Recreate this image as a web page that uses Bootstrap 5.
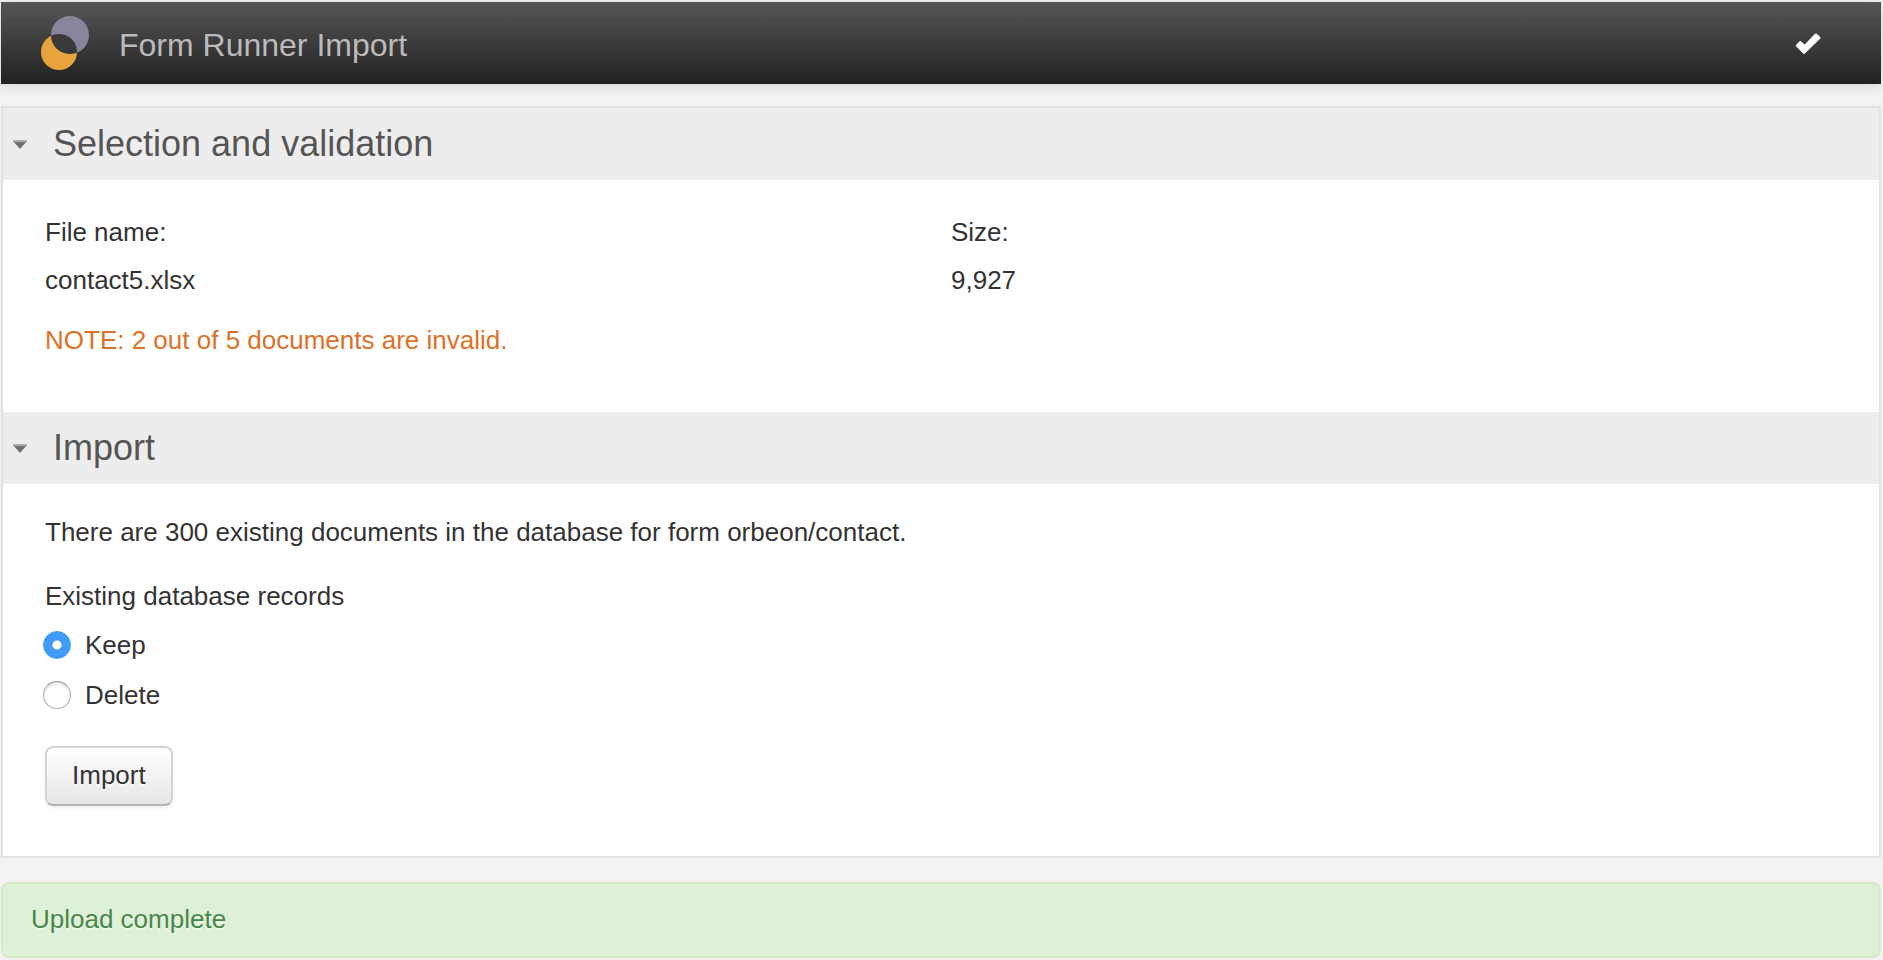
<!DOCTYPE html>
<html lang="en">
<head>
<meta charset="utf-8">
<meta name="viewport" content="width=device-width, initial-scale=1">
<title>Form Runner Import</title>
<link rel="stylesheet" href="https://cdn.jsdelivr.net/npm/bootstrap@5.3.0/dist/css/bootstrap.min.css">
<style>
  body {
    background: #f2f2f2;
    color: #333;
    font-family: "Liberation Sans", Arial, sans-serif;
    font-size: 26px;
    line-height: 48px;
    padding: 2px 2px 2px 1px;
  }
  .fr-navbar {
    background: linear-gradient(#555, #222);
    box-shadow: 0 2px 12px rgba(0, 0, 0, .12);
    min-height: 82px;
    padding: 0 60px 0 40px;
  }
  .fr-brand { gap: 28px; color: #bbb; font-size: 32px; line-height: 40px; }
  .fr-brand:hover { color: #ddd; }
  .fr-brand span { padding-top: 4px; }
  .fr-panel { background: #fff; border: 2px solid #e2e2e2; margin-top: 22px; }
  .fr-toggle {
    background: #ededed;
    color: #555;
    font-size: 36px;
    line-height: 44px;
    gap: 26px;
    padding: 14px 10px;
  }
  .fr-body { padding: 28px 22px 48px 42px; }
  .fr-body-import { padding: 24px 22px 50px 42px; }
  .fr-note { color: #dd7127; margin-top: 12px; }
  .fr-choice { gap: 14px; height: 50px; margin-left: -2px; }
  .fr-choice .form-check-input {
    width: 28px;
    height: 28px;
    margin: 0;
    border: 1px solid #b0b0b0;
    border-top-color: #999;
    box-shadow: inset 0 2px 2px rgba(0, 0, 0, .12);
  }
  .fr-choice .form-check-input:checked {
    background: radial-gradient(circle, #fff 0 4px, #419bf9 5px);
    border-color: #419bf9;
    box-shadow: none;
  }
  .fr-btn {
    background: linear-gradient(#fff, #e6e6e6);
    border: 2px solid #d4d4d4;
    border-bottom-color: #b3b3b3;
    border-radius: 8px;
    box-shadow: 0 2px 4px rgba(0, 0, 0, .06);
    color: #333;
    font-size: 26px;
    line-height: 40px;
    margin-top: 26px;
    padding: 7px 25px 9px;
    text-shadow: 0 2px 2px #fff;
  }
  .fr-alert {
    background: #dff0d8;
    border: 2px solid #d6e9c6;
    border-radius: 8px;
    color: #468847;
    margin: 24px 0 0;
    padding: 11px 28px 13px;
    text-shadow: 0 2px 0 rgba(255, 255, 255, .5);
  }
</style>
</head>
<body>
<nav class="navbar fr-navbar">
  <a class="navbar-brand fr-brand d-flex align-items-center m-0 p-0" href="#">
    <svg width="50" height="54" viewBox="0 0 50 54" aria-hidden="true">
      <clipPath id="upper-disc"><circle cx="29" cy="19" r="19"/></clipPath>
      <circle cx="18" cy="36" r="18" fill="#e8a33d"/>
      <circle cx="29" cy="19" r="19" fill="#88849b"/>
      <circle cx="18" cy="36" r="18" fill="#393939" clip-path="url(#upper-disc)"/>
    </svg>
    <span>Form Runner Import</span>
  </a>
  <button class="btn border-0 p-0 d-flex" type="button" aria-label="Status: valid">
    <svg width="26" height="23" viewBox="0 0 28 24" aria-hidden="true">
      <path d="M1 13.5L5 9.5Q6 9 7 10L10.500 13L21 2Q22.500 .5 24 2L27 5Q28 6 27 7L11 22.500Q10 24 8.500 22.500L1 15Q.5 14.500 1 13.500Z" fill="#fff"/>
    </svg>
  </button>
</nav>

<main>
  <div class="fr-panel">
    <section>
      <h2 class="m-0">
        <button class="fr-toggle d-flex align-items-center w-100 border-0 text-start" type="button" data-bs-toggle="collapse" data-bs-target="#selection" aria-expanded="true" aria-controls="selection">
          <svg width="14" height="9" viewBox="0 0 14 9" aria-hidden="true"><path d="M0 1H14L7 9Z" fill="#707070"/><path d="M0 0H14V2H0Z" fill="#aaa"/></svg>
          Selection and validation
        </button>
      </h2>
      <div id="selection" class="collapse show">
        <div class="fr-body">
          <div class="row g-0">
            <div class="col-6"><div>File name:</div><div>contact5.xlsx</div></div>
            <div class="col-6"><div>Size:</div><div>9,927</div></div>
          </div>
          <p class="fr-note mb-0">NOTE: 2 out of 5 documents are invalid.</p>
        </div>
      </div>
    </section>
    <section>
      <h2 class="m-0">
        <button class="fr-toggle d-flex align-items-center w-100 border-0 text-start" type="button" data-bs-toggle="collapse" data-bs-target="#import" aria-expanded="true" aria-controls="import">
          <svg width="14" height="9" viewBox="0 0 14 9" aria-hidden="true"><path d="M0 1H14L7 9Z" fill="#707070"/><path d="M0 0H14V2H0Z" fill="#aaa"/></svg>
          Import
        </button>
      </h2>
      <div id="import" class="collapse show">
        <form class="fr-body-import">
          <p class="mb-3">There are 300 existing documents in the database for form orbeon/contact.</p>
          <div role="radiogroup" aria-labelledby="records-label">
            <div id="records-label">Existing database records</div>
            <div class="fr-choice d-flex align-items-center">
              <input class="form-check-input" type="radio" name="records" id="keep" checked>
              <label for="keep">Keep</label>
            </div>
            <div class="fr-choice d-flex align-items-center">
              <input class="form-check-input" type="radio" name="records" id="delete">
              <label for="delete">Delete</label>
            </div>
          </div>
          <button class="btn fr-btn d-block" type="button">Import</button>
        </form>
      </div>
    </section>
  </div>
  <div class="alert fr-alert" role="status">Upload complete</div>
</main>
<script src="https://cdn.jsdelivr.net/npm/bootstrap@5.3.0/dist/js/bootstrap.bundle.min.js"></script>
</body>
</html>
